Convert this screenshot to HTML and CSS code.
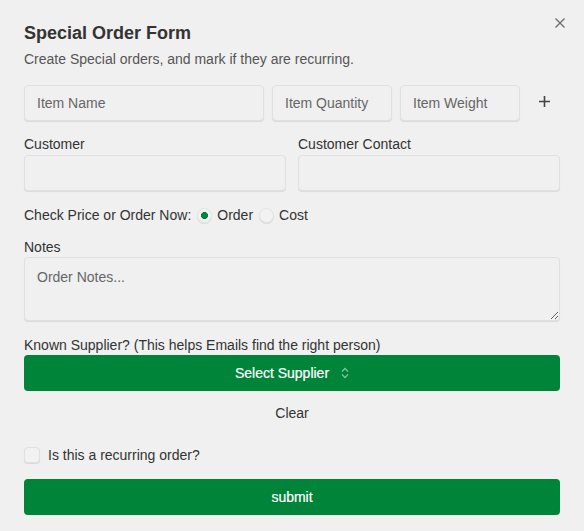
FILE: index.html
```html
<!DOCTYPE html>
<html lang="en">
<head>
<meta charset="utf-8">
<title>Special Order Form</title>
<link rel="stylesheet" href="styles.css">
</head>
<body>
<div class="modal">
  <button class="close" type="button" aria-label="Close">
    <svg width="10" height="10" viewBox="0 0 10 10"><path d="M0.5 0.5 L9.5 9.5 M9.5 0.5 L0.5 9.5" stroke="#6b6b6b" stroke-width="1.3" fill="none"/></svg>
  </button>
  <h1 class="title">Special Order Form</h1>
  <p class="subtitle">Create Special orders, and mark if they are recurring.</p>

  <div class="item-row">
    <input class="field item-name" type="text" placeholder="Item Name">
    <input class="field item-small" type="text" placeholder="Item Quantity">
    <input class="field item-small" type="text" placeholder="Item Weight">
    <button class="plus" type="button" aria-label="Add item">
      <svg width="11" height="11" viewBox="0 0 11 11"><path d="M5.5 0 V11 M0 5.5 H11" stroke="#444" stroke-width="1.6" fill="none"/></svg>
    </button>
  </div>

  <div class="two-col">
    <div class="col">
      <label class="label">Customer</label>
      <input class="field" type="text">
    </div>
    <div class="col">
      <label class="label">Customer Contact</label>
      <input class="field" type="text">
    </div>
  </div>

  <div class="radio-row">
    <span>Check Price or Order Now:</span>
    <input class="radio" type="radio" name="mode" checked>
    <span>Order</span>
    <input class="radio" type="radio" name="mode">
    <span>Cost</span>
  </div>

  <label class="label notes-label">Notes</label>
  <textarea class="field notes" placeholder="Order Notes..."></textarea>

  <label class="label supplier-label">Known Supplier? (This helps Emails find the right person)</label>
  <button class="green-btn" type="button">
    <span>Select Supplier</span>
    <svg class="chev" width="8" height="12" viewBox="0 0 8 12"><path d="M1 4.6 L4 1.4 L7 4.6 M1 7.4 L4 10.6 L7 7.4" stroke="rgba(255,255,255,0.55)" stroke-width="1.3" fill="none"/></svg>
  </button>
  <button class="clear" type="button">Clear</button>

  <div class="check-row">
    <input class="checkbox" type="checkbox">
    <span>Is this a recurring order?</span>
  </div>

  <button class="green-btn submit" type="button">submit</button>
</div>
</body>
</html>
```

FILE: styles.css
```css
* { box-sizing: border-box; }

html, body {
  margin: 0;
  padding: 0;
  background: #f0f0f0;
}

body {
  font-family: "Liberation Sans", Arial, Helvetica, sans-serif;
  font-size: 14px;
  color: #333;
}

.modal {
  position: relative;
  width: 584px;
  height: 531px;
  padding: 22px 24px 0 24px;
  background: #f0f0f0;
}

.close {
  position: absolute;
  top: 13px;
  right: 14px;
  width: 20px;
  height: 20px;
  padding: 0;
  border: 0;
  background: transparent;
  display: flex;
  align-items: center;
  justify-content: center;
}

.title {
  margin: 0;
  font-size: 18px;
  line-height: 22px;
  font-weight: bold;
  color: #333;
}

.subtitle {
  margin: 5px 0 16px 0;
  font-size: 14px;
  line-height: 20px;
  color: #555;
}

.field {
  display: block;
  width: 100%;
  height: 36px;
  margin: 0;
  padding: 0 12px;
  font-family: inherit;
  font-size: 14px;
  color: #333;
  background: #f0f0f0;
  border: 1px solid #e0e0e0;
  border-radius: 4px;
  box-shadow: 0 1px 1px rgba(0, 0, 0, 0.09);
  outline: none;
  -webkit-appearance: none;
  appearance: none;
}

.field::placeholder {
  color: #666;
}

.item-row {
  display: flex;
  gap: 8px;
  height: 36px;
}

.item-name { width: 240px; flex: none; }
.item-small { width: 120px; flex: none; }

.plus {
  width: 32px;
  height: 36px;
  padding: 0 0 4px 0;
  border: 0;
  background: transparent;
  display: flex;
  align-items: center;
  justify-content: center;
}

.two-col {
  display: grid;
  grid-template-columns: 1fr 1fr;
  column-gap: 12px;
  margin-top: 14px;
}

.label {
  display: block;
  font-size: 14px;
  line-height: 20px;
  color: #333;
}

.two-col .label {
  margin-top: -1px;
  margin-bottom: 1px;
}

.radio-row {
  display: flex;
  align-items: center;
  height: 20px;
  margin-top: 14px;
  line-height: 20px;
}

.radio {
  -webkit-appearance: none;
  appearance: none;
  width: 15px;
  height: 15px;
  margin: 0 5px 0 6px;
  border: 1px solid #e3e3e3;
  border-radius: 50%;
  background: #f2f2f2;
  box-shadow: 0 1px 1px rgba(0, 0, 0, 0.1);
}

.radio:checked {
  background: radial-gradient(circle at center, #00843a 0, #00843a 3.2px, #f2f2f2 3.8px);
}

.notes-label {
  margin-top: 12px;
}

.notes {
  height: 64px;
  padding: 10px 12px;
  line-height: 18px;
  resize: vertical;
}

.supplier-label {
  margin-top: 14px;
}

.green-btn {
  display: flex;
  align-items: center;
  justify-content: center;
  width: 100%;
  height: 36px;
  padding: 0;
  border: 0;
  border-radius: 4px;
  background: #00843a;
  color: #fff;
  font-family: inherit;
  font-size: 14px;
  line-height: 36px;
  -webkit-text-stroke: 0.2px #fff;
}

.chev {
  margin-left: 12px;
}

.clear {
  display: block;
  width: 100%;
  height: 36px;
  margin-top: 4px;
  padding: 0;
  border: 0;
  background: transparent;
  color: #333;
  font-family: inherit;
  font-size: 14px;
  line-height: 36px;
}

.check-row {
  display: flex;
  align-items: center;
  height: 20px;
  margin-top: 14px;
}

.checkbox {
  -webkit-appearance: none;
  appearance: none;
  width: 16px;
  height: 16px;
  margin: 0 8px 0 0;
  border: 1px solid #e0e0e0;
  border-radius: 4px;
  background: #f2f2f2;
  box-shadow: 0 1px 1px rgba(0, 0, 0, 0.1);
}

.submit {
  margin-top: 14px;
}
```
